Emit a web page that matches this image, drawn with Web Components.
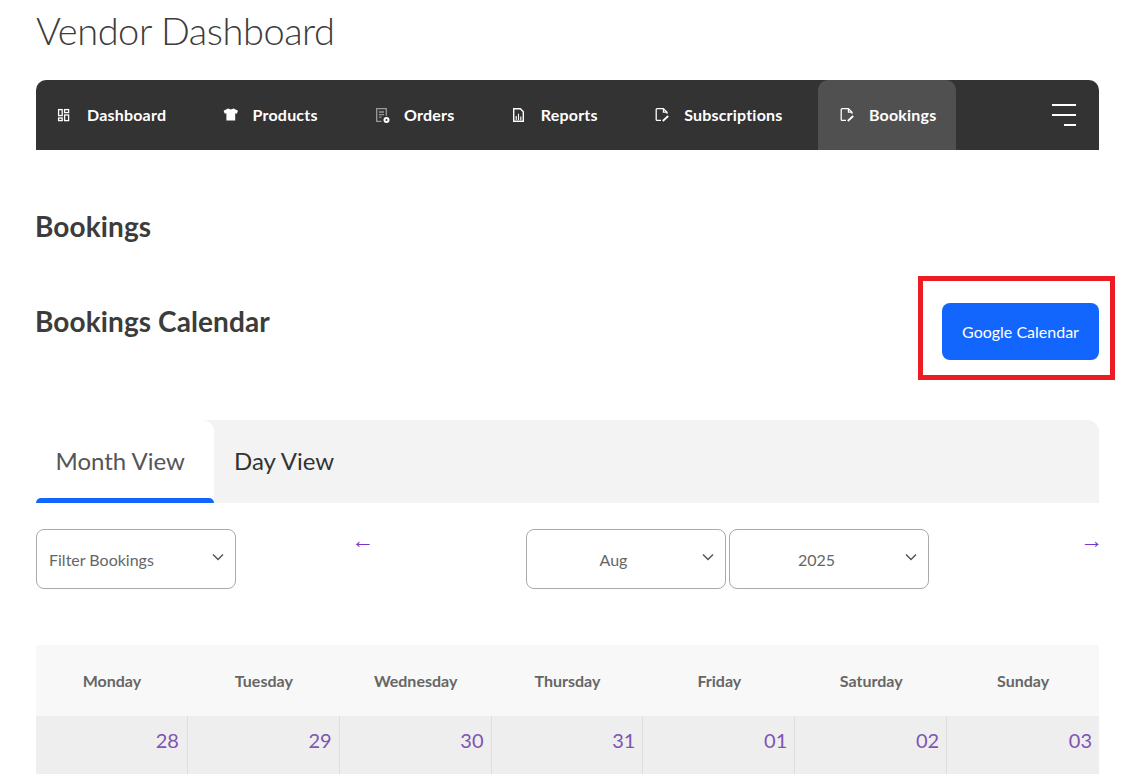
<!DOCTYPE html>
<html>
<head>
<meta charset="utf-8">
<title>Vendor Dashboard</title>
<style>
  html, body { margin: 0; padding: 0; background: #fff; height: 774px; overflow: hidden; }
  body { font-family: Lato, "Liberation Sans", sans-serif; color: #3c3c3c; }
</style>
</head>
<body>
<vendor-page>
  <vendor-nav>
    <nav-item icon="grid">Dashboard</nav-item>
    <nav-item icon="shirt">Products</nav-item>
    <nav-item icon="orders">Orders</nav-item>
    <nav-item icon="report">Reports</nav-item>
    <nav-item icon="note">Subscriptions</nav-item>
    <nav-item icon="note" active>Bookings</nav-item>
  </vendor-nav>
  <bookings-head></bookings-head>
  <view-tabs></view-tabs>
  <calendar-filters></calendar-filters>
  <booking-calendar></booking-calendar>
</vendor-page>

<script>
const ICONS = {
  grid: `<g fill="none" stroke="#fff" stroke-width="1.3"><rect x="1.600" y="2.600" width="3.600" height="6"/><rect x="7.600" y="2.600" width="4" height="3"/><rect x="1.600" y="11" width="3.600" height="2.600"/><rect x="7.600" y="8" width="4" height="5.600"/></g>`,
  shirt: `<path fill="#fff" d="M5 1.500 7.800 2.600 10.600 1.500l4.400 2.300-1.200 3-1.600-.5v7.200H3.400V6.300l-1.600.5-1.200-3z"/>`,
  orders: `<g fill="none" stroke="#9a9a9a" stroke-width="1.300"><path d="M7.500 14.300H2.700V1.700h9.600v7"/><path d="M5 5h5M5 7.600h5M5 10.200h2.500"/></g><circle cx="12.500" cy="13" r="3" fill="#fff"/><circle cx="12.500" cy="13" r="1" fill="#333"/>`,
  report: `<path fill="none" stroke="#fff" stroke-width="1.400" d="M2.700 1.700h6.600l3 3v9.600H2.700z"/><path fill="none" stroke="#fff" stroke-width="1.100" d="M5.200 13V9M7.500 13V6.800M9.800 13V9.500"/>`,
  note: `<path fill="none" stroke="#fff" stroke-width="1.300" d="M7 13.400H3.200a1 1 0 0 1-1-1V2.600a1 1 0 0 1 1-1h6.200l3.600 3.600v1.600"/><path fill="none" stroke="#fff" stroke-width="1.200" d="M9.400 1.800v3.400H13"/><path fill="none" stroke="#fff" stroke-width="1.800" d="M8.800 14l5.400-5"/>`
};

class VendorPage extends HTMLElement {
  constructor() {
    super();
    this.attachShadow({ mode: "open" });
    this.shadowRoot.innerHTML = `
    <style>
      :host { display: block; padding: 0 22px 0 36px; }
      h1 {
        margin: 0;
        padding-top: 7px;
        height: 80px;
        box-sizing: border-box;
        font: 300 38px/46px Lato, sans-serif;
        letter-spacing: -0.45px;
        color: #3c3c3c;
      }
    </style>
    <h1>Vendor Dashboard</h1>
    <slot></slot>
    `;
  }
}

class VendorNav extends HTMLElement {
  constructor() {
    super();
    this.attachShadow({ mode: "open" });
    this.shadowRoot.innerHTML = `
    <style>
      :host {
        display: flex;
        align-items: stretch;
        height: 70px;
        background: #333;
        border-radius: 10px 10px 0 0;
      }
      .items { display: flex; flex: 1; }
      .burger {
        display: flex;
        flex-direction: column;
        align-items: flex-end;
        justify-content: center;
        gap: 8px;
        width: 24px;
        margin-right: 23px;
      }
      .burger i { display: block; height: 2px; background: #fff; width: 24px; }
      .burger i:last-child { width: 12px; }
    </style>
    <div class="items"><slot></slot></div>
    <div class="burger"><i></i><i></i><i></i></div>
    `;
  }
}

class NavItem extends HTMLElement {
  constructor() {
    super();
    this.attachShadow({ mode: "open" });
    const icon = ICONS[this.getAttribute("icon")] || "";
    this.shadowRoot.innerHTML = `
    <style>
      :host {
        display: flex;
        align-items: center;
        gap: 14px;
        padding: 0 20px 0 21px;
        margin-right: 15.4px;
        color: #fff;
        font: 700 16px/20px Lato, sans-serif;
        letter-spacing: 0.2px;
        border-radius: 10px 10px 0 0;
      }
      :host([active]) { background: #505050; }
      svg { width: 16px; height: 16px; display: block; }
    </style>
    <svg viewBox="0 0 16 16">${icon}</svg>
    <slot></slot>
    `;
  }
}

class BookingsHead extends HTMLElement {
  constructor() {
    super();
    this.attachShadow({ mode: "open" });
    this.shadowRoot.innerHTML = `
    <style>
      :host { display: block; color: #3c3c3c; }
      h2 { margin: 0 0 0 -1px; font: 700 28px/34px Lato, sans-serif; letter-spacing: 0.1px; }
      .page { padding-top: 59px; height: 126px; box-sizing: border-box; }
      .row {
        display: flex;
        justify-content: space-between;
        align-items: flex-start;
        height: 144px;
      }
      .row h2 { padding-top: 28px; }
      .mark {
        border: 5px solid #ed1c24;
        margin: 0 -16px 0 0;
        padding: 22px 11px 0 19px;
        height: 104px;
        box-sizing: border-box;
      }
      button {
        display: block;
        width: 157px;
        height: 57px;
        border: 0;
        border-radius: 8px;
        background: #1266fd;
        color: #fff;
        font: 400 16px/20px Lato, sans-serif;
        padding: 0;
      }
    </style>
    <div class="page"><h2>Bookings</h2></div>
    <div class="row">
      <h2>Bookings Calendar</h2>
      <div class="mark"><button>Google Calendar</button></div>
    </div>
    `;
  }
}

class ViewTabs extends HTMLElement {
  constructor() {
    super();
    this.attachShadow({ mode: "open" });
    this.shadowRoot.innerHTML = `
    <style>
      :host {
        display: flex;
        height: 83px;
        background: #f3f3f3;
        border-radius: 0 12px 0 0;
        font: 400 24px/30px Lato, sans-serif;
        color: #333;
      }
      .tab { display: flex; align-items: center; padding: 0 20px 2px; height: 83px; box-sizing: border-box; }
      .on {
        width: 178px;
        padding-left: 19.5px;
        background: #fff;
        color: #555;
        border-radius: 0 12px 0 0;
        position: relative;
      }
      .on::after {
        content: "";
        position: absolute;
        left: 0; right: 0; bottom: 0;
        height: 5px;
        background: #1266fd;
        border-radius: 5px 5px 0 0;
      }
    </style>
    <div class="tab on">Month View</div>
    <div class="tab">Day View</div>
    `;
  }
}

class FakeSelect extends HTMLElement {
  constructor() {
    super();
    this.attachShadow({ mode: "open" });
    this.shadowRoot.innerHTML = `
    <style>
      :host {
        display: block;
        position: relative;
        width: 200px;
        height: 60px;
        box-sizing: border-box;
        border: 1px solid #aaa;
        border-radius: 8px;
        color: #666;
        font: 400 16px/60px Lato, sans-serif;
        padding: 0 12px;
      }
      :host([center]) { text-align: center; padding-right: 37px; }
      span { display: block; line-height: 60px; height: 58px; }
      svg { position: absolute; right: 11px; top: 23px; width: 12px; height: 8px; }
    </style>
    <span><slot></slot></span>
    <svg viewBox="0 0 12 8"><path d="M1 1.500l5 5 5-5" fill="none" stroke="#555" stroke-width="1.500"/></svg>
    `;
  }
}

class CalendarFilters extends HTMLElement {
  constructor() {
    super();
    this.attachShadow({ mode: "open" });
    this.shadowRoot.innerHTML = `
    <style>
      :host {
        display: grid;
        grid-template-columns: 200px 290px auto 1fr;
        padding-top: 26px;
        height: 142px;
        box-sizing: border-box;
      }
      .arrow {
        color: #7a35cc;
        font: 400 23px/24px "Liberation Sans", sans-serif;
        margin-top: -1px;
      }
      .prev { padding-left: 115px; }
      .next { text-align: right; margin-right: -4px; }
      .pair { display: flex; gap: 3px; }
    </style>
    <fake-select>Filter Bookings</fake-select>
    <div class="arrow prev">←</div>
    <div class="pair">
      <fake-select center>Aug</fake-select>
      <fake-select center>2025</fake-select>
    </div>
    <div class="arrow next">→</div>
    `;
  }
}

class BookingCalendar extends HTMLElement {
  constructor() {
    super();
    this.attachShadow({ mode: "open" });
    const days = ["Monday", "Tuesday", "Wednesday", "Thursday", "Friday", "Saturday", "Sunday"];
    const dates = ["28", "29", "30", "31", "01", "02", "03"];
    this.shadowRoot.innerHTML = `
    <style>
      :host { display: block; }
      .grid { display: grid; grid-template-columns: repeat(7, 1fr); }
      .head { background: #f8f8f8; height: 71px; align-items: center; }
      .head div {
        text-align: center;
        font: 700 16px/20px Lato, sans-serif;
        color: #666;
      }
      .dates { background: #eee; height: 60px; }
      .dates div {
        text-align: right;
        padding: 11px 7px 0 0;
        border-right: 1px solid #ddd;
        font: 400 20px/26px Lato, sans-serif;
        color: #7f54b3;
      }
      .dates div:first-child { padding-right: 8px; }
      .dates div:last-child { border-right: 0; }
    </style>
    <div class="grid head">${days.map(d => `<div>${d}</div>`).join("")}</div>
    <div class="grid dates">${dates.map(d => `<div>${d}</div>`).join("")}</div>
    `;
  }
}

customElements.define("nav-item", NavItem);
customElements.define("vendor-nav", VendorNav);
customElements.define("vendor-page", VendorPage);
customElements.define("bookings-head", BookingsHead);
customElements.define("view-tabs", ViewTabs);
customElements.define("fake-select", FakeSelect);
customElements.define("calendar-filters", CalendarFilters);
customElements.define("booking-calendar", BookingCalendar);
</script>
</body>
</html>
